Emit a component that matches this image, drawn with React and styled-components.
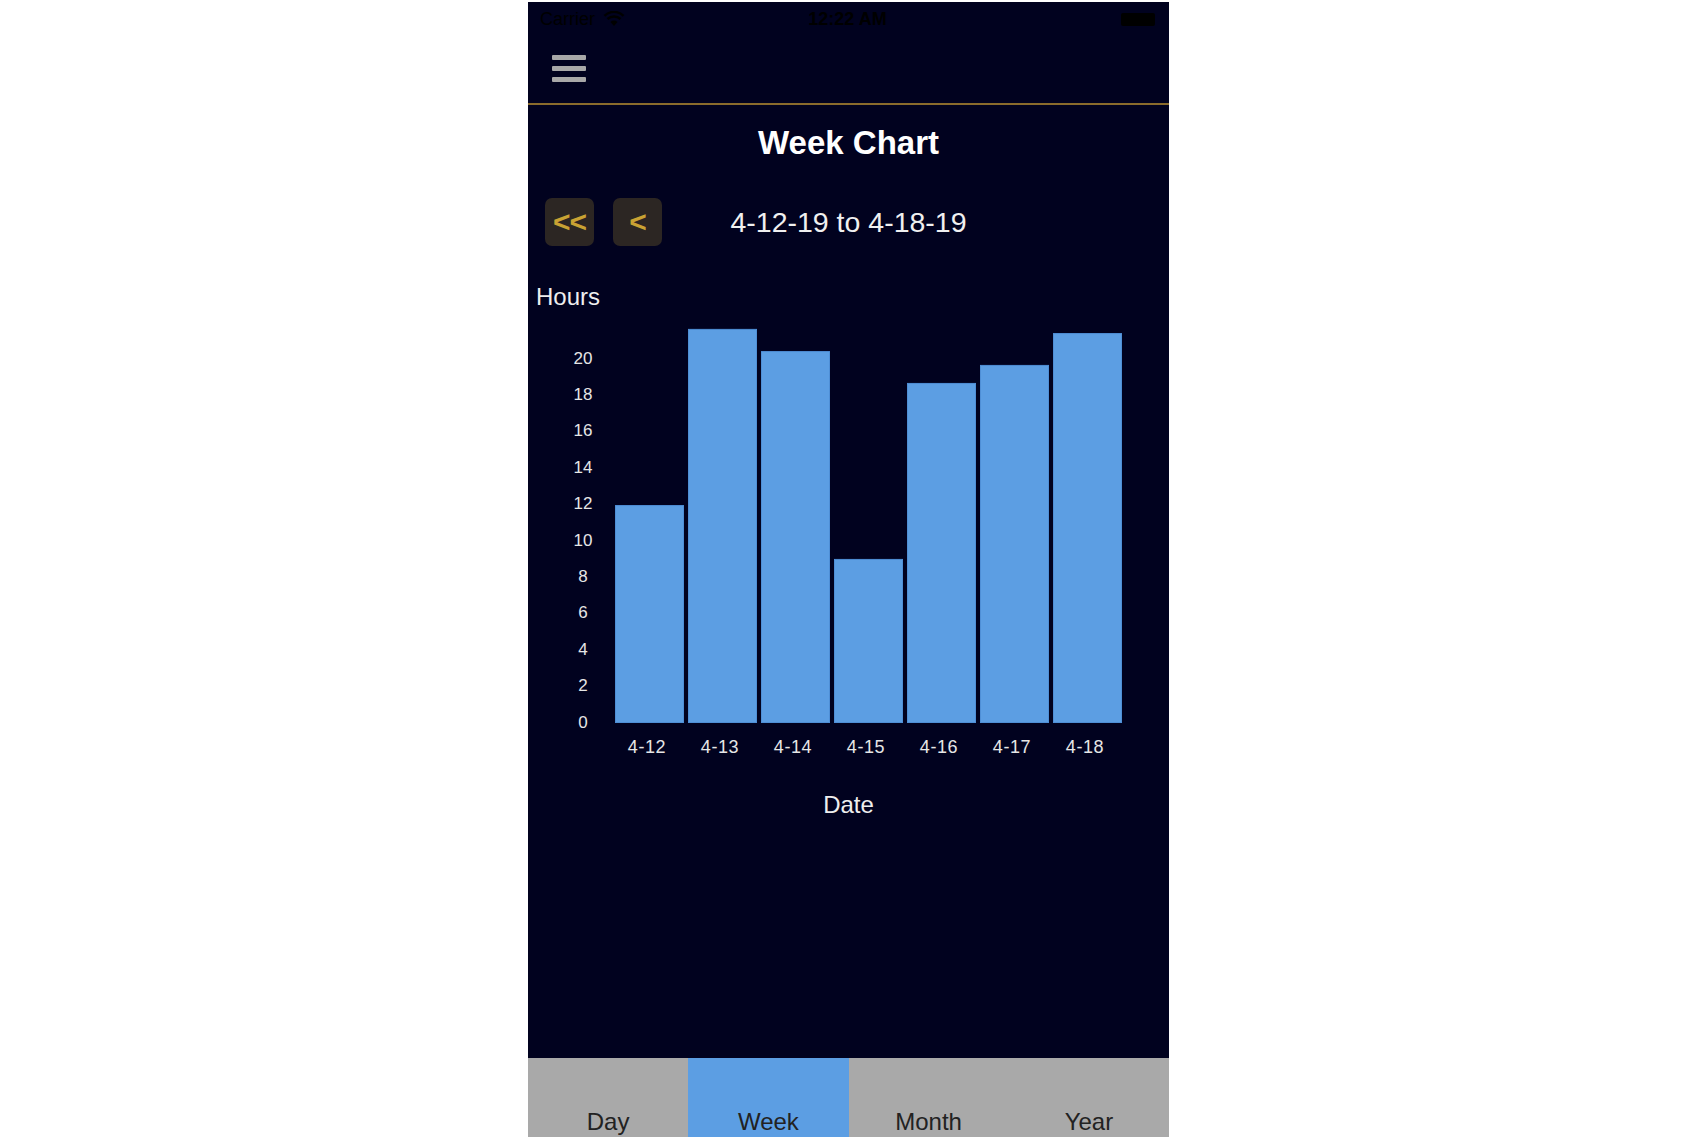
import React from 'react';
import styled, { createGlobalStyle } from 'styled-components';

const GlobalStyle = createGlobalStyle`
  body {
    margin: 0;
    background: #ffffff;
    font-family: "Liberation Sans", Arial, sans-serif;
  }
`;

const Screen = styled.div`
  width: 641px;
  height: 1135px;
  margin: 2px 0 0 528px;
  background: #01021f;
  display: flex;
  flex-direction: column;
  overflow: hidden;
`;

const StatusBar = styled.div`
  height: 34px;
  display: grid;
  grid-template-columns: 1fr auto 1fr;
  align-items: center;
  padding: 0 14px 0 12px;
  color: #000;
  font-size: 18px;
`;

const Carrier = styled.div`
  display: flex;
  align-items: center;
  gap: 8px;
`;

const Clock = styled.div`
  font-weight: bold;
`;

const Battery = styled.div`
  justify-self: end;
  width: 34px;
  height: 13px;
  background: #000;
  border-radius: 2px;
`;

const NavBar = styled.div`
  height: 69px;
  border-bottom: 2px solid #8a6b2c;
  padding: 19px 0 0 24px;
  box-sizing: border-box;
`;

const Hamburger = styled.div`
  width: 34px;
  height: 27px;
  display: flex;
  flex-direction: column;
  justify-content: space-between;

  span {
    height: 5px;
    background: #a8a8a8;
    border-radius: 1px;
  }
`;

const Title = styled.h1`
  margin: 18px 0 0;
  text-align: center;
  font-size: 33px;
  line-height: 40px;
  font-weight: bold;
  color: #ffffff;
`;

const Controls = styled.div`
  margin-top: 34px;
  height: 50px;
  display: grid;
  grid-template-columns: 1fr auto 1fr;
  align-items: center;
`;

const ButtonGroup = styled.div`
  display: flex;
  gap: 19px;
  padding-left: 17px;
`;

const NavButton = styled.div`
  width: 49px;
  height: 48px;
  border-radius: 7px;
  background: #2c2623;
  color: #c9a233;
  font-size: 30px;
  font-weight: bold;
  display: flex;
  align-items: center;
  justify-content: center;
  letter-spacing: -1px;
`;

const DateRange = styled.div`
  font-size: 28.5px;
  color: #f0f0f0;
`;

const AxisTitle = styled.div`
  margin-top: ${(p) => p.gap || 36}px;
  padding-left: ${(p) => p.indent || 0}px;
  font-size: 24px;
  line-height: 28px;
  color: #eeeeee;
  text-align: ${(p) => p.align || 'left'};
`;

const ChartSvg = styled.svg`
  display: block;
  width: 640px;
  height: 450px;
`;

const Spacer = styled.div`
  flex: 1;
`;

const TabBar = styled.div`
  height: 79px;
  display: grid;
  grid-template-columns: repeat(4, 1fr);
`;

const Tab = styled.div`
  background: ${(p) => (p.active ? '#5c9ee3' : '#a9a9a9')};
  display: flex;
  align-items: flex-end;
  justify-content: center;
  padding-bottom: 1px;
  font-size: 24px;
  line-height: 28px;
  color: #222;
`;

const data = [
  { label: '4-12', hours: 11.92 },
  { label: '4-13', hours: 21.6 },
  { label: '4-14', hours: 20.38 },
  { label: '4-15', hours: 8.96 },
  { label: '4-16', hours: 18.63 },
  { label: '4-17', hours: 19.62 },
  { label: '4-18', hours: 21.37 },
];

const BASE = 411;
const UNIT = 18.2;
const ticks = [0, 2, 4, 6, 8, 10, 12, 14, 16, 18, 20];

function WeekBars() {
  return (
    <ChartSvg viewBox="0 0 640 450">
      {ticks.map((t) => (
        <text
          key={t}
          x="55"
          y={BASE - t * UNIT}
          fill="#e6e6e6"
          fontSize="17"
          textAnchor="middle"
          dominantBaseline="central"
          fontFamily="Liberation Sans, Arial, sans-serif"
        >
          {t}
        </text>
      ))}
      {data.map((d, i) => {
        const h = d.hours * UNIT;
        const x = 87 + 73 * i;
        return (
          <g key={d.label}>
            <rect
              x={x + 0.5}
              y={BASE - h + 0.5}
              width="68"
              height={h}
              fill="#5c9ee3"
              stroke="#4f8fd6"
              strokeWidth="1"
            />
            <text
              x={x + 32}
              y="436"
              fill="#e6e6e6"
              fontSize="18"
              letterSpacing="0.6"
              textAnchor="middle"
              dominantBaseline="central"
              fontFamily="Liberation Sans, Arial, sans-serif"
            >
              {d.label}
            </text>
          </g>
        );
      })}
    </ChartSvg>
  );
}

export default function App() {
  return (
    <>
      <GlobalStyle />
      <Screen>
        <StatusBar>
          <Carrier>
            Carrier
            <svg width="22" height="16" viewBox="0 0 22 16">
              <path d="M11 15 L7.5 11 A5 5 0 0 1 14.5 11 Z" fill="#000" />
              <path d="M4.5 8 A9.5 9.5 0 0 1 17.5 8" stroke="#000" strokeWidth="2.4" fill="none" />
              <path d="M1.5 4.8 A13.5 13.5 0 0 1 20.5 4.8" stroke="#000" strokeWidth="2.4" fill="none" />
            </svg>
          </Carrier>
          <Clock>12:22 AM</Clock>
          <Battery />
        </StatusBar>
        <NavBar>
          <Hamburger>
            <span />
            <span />
            <span />
          </Hamburger>
        </NavBar>
        <Title>Week Chart</Title>
        <Controls>
          <ButtonGroup>
            <NavButton>&lt;&lt;</NavButton>
            <NavButton>&lt;</NavButton>
          </ButtonGroup>
          <DateRange>4-12-19 to 4-18-19</DateRange>
        </Controls>
        <AxisTitle indent={8}>Hours</AxisTitle>
        <WeekBars />
        <AxisTitle align="center" gap={30}>
          Date
        </AxisTitle>
        <Spacer />
        <TabBar>
          <Tab>Day</Tab>
          <Tab active>Week</Tab>
          <Tab>Month</Tab>
          <Tab>Year</Tab>
        </TabBar>
      </Screen>
    </>
  );
}
